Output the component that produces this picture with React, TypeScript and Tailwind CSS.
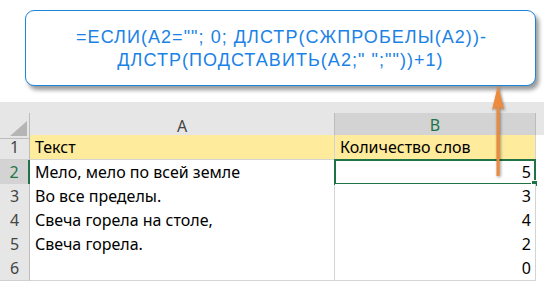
import React from "react";

const rows: { n: number; a: string; b: string }[] = [
  { n: 1, a: "Текст", b: "Количество слов" },
  { n: 2, a: "Мело, мело по всей земле", b: "5" },
  { n: 3, a: "Во все пределы.", b: "3" },
  { n: 4, a: "Свеча горела на столе,", b: "4" },
  { n: 5, a: "Свеча горела.", b: "2" },
  { n: 6, a: "", b: "0" },
];

const cellFont = { fontFamily: '"Noto Sans", "Open Sans", sans-serif' };

function Row({ n, a, b }: { n: number; a: string; b: string }) {
  const header = n === 1;
  const active = n === 2;
  const h = n === 1 ? "h-[25px]" : "h-[24px]";
  return (
    <div className={`grid grid-cols-[30px_305px_201px_1fr] ${h}`}>
      <div
        className={`flex items-center justify-center border-b border-[#d0d0d0] text-[16px] ${
          active
            ? "bg-[#d3d3d3] text-[#217346] border-r-2 border-r-[#217346]"
            : "bg-[#e6e6e6] text-[#444] border-r border-r-[#bcbcbc]"
        }`}
      >
        {n}
      </div>
      <div
        className={`flex items-center pl-[5px] text-[16px] text-black border-r border-b border-[#d4d4d4] ${
          header ? "bg-[#ffeb9c]" : "bg-white"
        }`}
      >
        {a}
      </div>
      <div
        className={`relative flex items-center text-[16px] text-black border-r border-b border-[#d4d4d4] ${
          header ? "bg-[#ffeb9c] pl-[5px]" : "bg-white justify-end pr-[4px]"
        }`}
      >
        {b}
        {active && (
          <>
            <div className="absolute -left-[1px] -top-[1px] -right-[1px] -bottom-[1px] border-2 border-[#217346]" />
            <div className="absolute -right-[3px] -bottom-[3px] w-[5px] h-[5px] bg-[#217346] border border-white box-content" />
          </>
        )}
      </div>
      <div className="bg-white" />
    </div>
  );
}

export default function App() {
  return (
    <div className="relative w-[544px] h-[281px] overflow-hidden bg-white" style={cellFont}>
      {/* callout with the formula */}
      <div className="pt-[10px] pl-[25px] h-[102px]">
        <div
          className="w-[511px] h-[76px] rounded-[9px] border-[1.5px] border-[#1d84dc] bg-white shadow-[3px_4px_4px_rgba(0,0,0,0.4)] flex flex-col items-center justify-center text-[#1a82e6] text-[18px] leading-[23px] tracking-[1.05px]"
          style={{ fontFamily: '"Liberation Sans", Arial, sans-serif' }}
        >
          <div className="pl-[2px] pt-[2px]">=ЕСЛИ(A2=&quot;&quot;; 0; ДЛСТР(СЖПРОБЕЛЫ(A2))-</div>
          <div>ДЛСТР(ПОДСТАВИТЬ(A2;&quot; &quot;;&quot;&quot;))+1)</div>
        </div>
      </div>

      {/* sheet */}
      <div className="h-[11px] bg-[#e6e6e6]" />
      <div className="grid grid-cols-[30px_305px_201px_1fr] h-[22px] bg-[#e6e6e6] text-[16px]">
        <div className="relative border-r border-[#bcbcbc] border-b border-b-[#bcbcbc]">
          <svg className="absolute right-[2px] bottom-[2px]" width="17" height="15" viewBox="0 0 17 15">
            <polygon points="17,0 17,15 0,15" fill="#b5b5b5" />
          </svg>
        </div>
        <div className="flex items-center justify-center text-[#444] border-r border-[#bcbcbc] border-b border-b-[#bcbcbc]">
          A
        </div>
        <div className="flex items-center justify-center bg-[#d3d3d3] text-[#217346] border-r border-[#bcbcbc] border-b-2 border-b-[#217346]">
          B
        </div>
        <div className="border-b border-b-[#bcbcbc]" />
      </div>
      {rows.map((r) => (
        <Row key={r.n} {...r} />
      ))}

      {/* pointer arrow */}
      <svg
        className="absolute left-[488px] top-[82px]"
        width="20"
        height="98"
        viewBox="0 0 20 98"
        style={{ filter: "drop-shadow(1px 1px 1.5px rgba(0,0,0,0.45))" }}
      >
        <rect x="8.5" y="20" width="3" height="74" fill="#ee8a3c" />
        <polygon points="10,3 16,28 10,24 4,28" fill="#ee8a3c" />
      </svg>
    </div>
  );
}
